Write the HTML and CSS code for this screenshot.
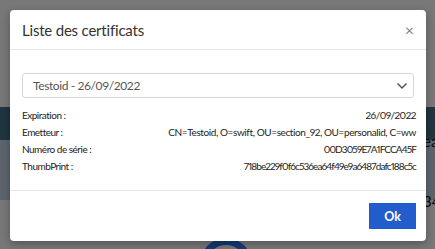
FILE: index.html
```html
<!DOCTYPE html>
<html lang="fr">
<head>
<meta charset="utf-8">
<link rel="stylesheet" href="styles.css">
</head>
<body>
<div class="page">
  <div class="band-dark"></div>
  <div class="band-light"><span class="bg-text t1">ea</span></div>
  <span class="bg-text t2">34</span>
  <div class="ring"></div>
</div>
<div class="overlay"></div>
<div class="modal">
  <div class="modal-header">
    <h4 class="modal-title">Liste des certificats</h4>
    <span class="close">&times;</span>
  </div>
  <div class="modal-body">
    <div class="select">
      <span>Testoid - 26/09/2022</span>
      <svg class="chev" width="12" height="8" viewBox="0 0 12 8"><path d="M1.5 1.5 L6 6 L10.5 1.5" fill="none" stroke="#555" stroke-width="1.5"/></svg>
    </div>
    <div class="rows">
      <div class="row"><span class="lbl">Expiration :</span><span class="val">26/09/2022</span></div>
      <div class="row"><span class="lbl">Emetteur :</span><span class="val wide">CN=Testoid, O=swift, OU=section_92, OU=personalid, C=ww</span></div>
      <div class="row"><span class="lbl">Numéro de série :</span><span class="val tight">00D3059E7A1FCCA45F</span></div>
      <div class="row"><span class="lbl">ThumbPrint :</span><span class="val tight">718be229f0f6c536ea64f49e9a6487dafc188c5c</span></div>
    </div>
  </div>
  <div class="modal-footer">
    <button class="btn-ok">Ok</button>
  </div>
</div>
</body>
</html>
```
FILE: styles.css
```css
html, body {
  margin: 0;
  padding: 0;
  width: 435px;
  height: 249px;
  overflow: hidden;
  font-family: Lato, "Noto Sans", sans-serif;
}
body {
  background: #f0f0f0;
  position: relative;
}
.page {
  position: absolute;
  inset: 0;
}
.band-dark {
  position: absolute;
  left: 0; right: 0;
  top: 107px; height: 33px;
  background: #3f6a80;
}
.band-light {
  position: absolute;
  left: 0; right: 0;
  top: 140px; height: 60px;
  background: #b8cadc;
}
.bg-text {
  position: absolute;
  font-size: 15px;
  color: #111;
  line-height: 1;
}
.t1 { left: 423px; top: -6px; }
.t2 { left: 423px; top: 194px; }
.ring {
  position: absolute;
  left: 200px; top: 238px;
  width: 52px; height: 52px;
  box-sizing: border-box;
  border: 7px solid #2c74e6;
  border-radius: 50%;
}
.overlay {
  position: absolute;
  inset: 0;
  background: rgba(0,0,0,0.5);
}
.modal {
  position: absolute;
  left: 10px; top: 10px;
  width: 416px;
  height: 231px;
  background: #fff;
  border-radius: 4px;
  display: flex;
  flex-direction: column;
  box-shadow: 0 3px 9px rgba(0,0,0,0.3);
}
.modal-header {
  height: 40px;
  box-sizing: border-box;
  display: flex;
  align-items: center;
  justify-content: space-between;
  padding: 0 12px 0 12px;
  border-bottom: 1px solid #e8e8ec;
}
.modal-title {
  margin: 0;
  font-size: 15px;
  letter-spacing: -0.2px;
  font-weight: 400;
  color: #333;
}
.close {
  font-size: 16px;
  color: #888;
  line-height: 1;
}
.modal-body {
  flex: 1;
  padding: 23px 12px 0 12px;
}
.select {
  height: 25px;
  box-sizing: border-box;
  border: 1px solid #d6d6d6;
  border-radius: 3px;
  display: flex;
  align-items: center;
  justify-content: space-between;
  padding: 0 5px 0 10px;
  font-size: 12px;
  letter-spacing: -0.4px;
  color: #555;
}
.rows {
  margin-top: 8px;
  margin-right: -2px;
}
.row {
  height: 17px;
  display: flex;
  align-items: center;
  justify-content: space-between;
  font-size: 10px;
  letter-spacing: -0.5px;
  font-variant-numeric: proportional-nums;
  color: #222;
}
.val.wide { letter-spacing: -0.4px; }
.val.tight { letter-spacing: -0.9px; }
.modal-footer {
  height: 51px;
  box-sizing: border-box;
  border-top: 1px solid #e8e8ec;
  display: flex;
  justify-content: flex-end;
  align-items: center;
  padding: 0 10px 0 0;
}
.btn-ok {
  width: 47px;
  height: 26px;
  border: none;
  background: #235ccb;
  color: #fff;
  font-family: Lato, "Noto Sans", sans-serif;
  font-weight: 700;
  font-size: 12.5px;
  border-radius: 0;
  padding: 0;
}
```
